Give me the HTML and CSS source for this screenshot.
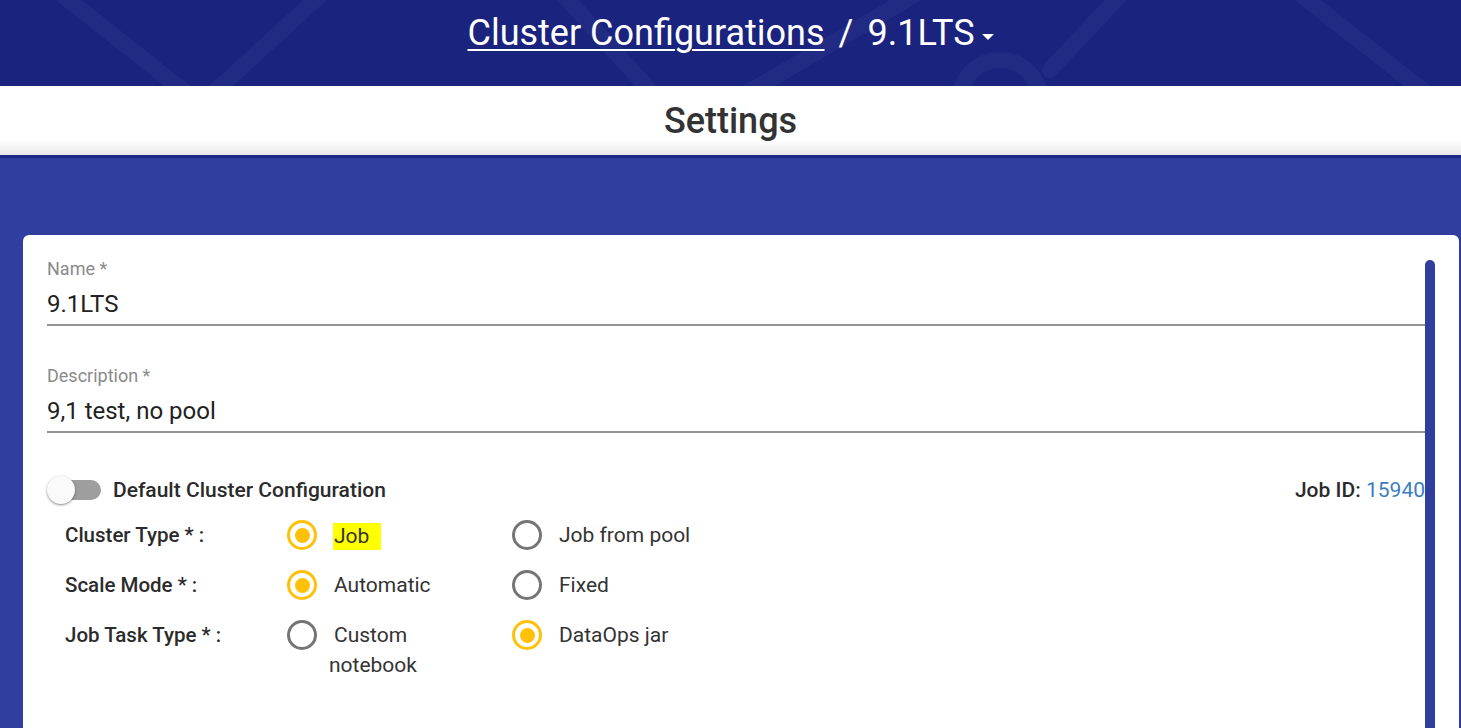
FILE: index.html
```
<!DOCTYPE html>
<html lang="en">
<head>
<meta charset="utf-8">
<title>Cluster Configurations - Settings</title>
<link rel="stylesheet" href="styles.css">
</head>
<body>
<header class="topbar">
  <svg class="deco" width="1461" height="86" viewBox="0 0 1461 86" aria-hidden="true">
    <g stroke="#ffffff" stroke-opacity="0.04" stroke-width="16" fill="none" stroke-linecap="round">
      <line x1="56" y1="-10" x2="190" y2="96"/>
      <line x1="326" y1="-10" x2="210" y2="96"/>
      <line x1="559" y1="-10" x2="655" y2="96"/>
      <line x1="923" y1="-10" x2="742" y2="96"/>
      <circle cx="1000" cy="100" r="40"/>
      <line x1="1125" y1="-10" x2="1050" y2="70"/>
      <line x1="1295" y1="-10" x2="1430" y2="96"/>
    </g>
  </svg>
  <h1 class="crumbs">
    <a class="crumb-link" href="#">Cluster Configurations</a>
    <span class="crumb-sep">/</span>
    <span class="crumb-current">9.1LTS</span>
    <span class="caret"></span>
  </h1>
</header>

<div class="titlebar">
  <h2 class="title">Settings</h2>
</div>

<main class="content">
  <section class="card">
    <div class="form">
      <div class="field first">
        <div class="field-label">Name *</div>
        <div class="field-value">9.1LTS</div>
      </div>
      <div class="field">
        <div class="field-label">Description *</div>
        <div class="field-value">9,1 test, no pool</div>
      </div>

      <div class="toggle-row">
        <div class="toggle-left">
          <span class="switch"><span class="switch-track"></span><span class="switch-thumb"></span></span>
          <span class="toggle-label">Default Cluster Configuration</span>
        </div>
        <div class="job-id"><span class="job-id-key">Job ID:</span> <span class="job-id-val">15940</span></div>
      </div>

      <div class="opt-row">
        <div class="opt-label">Cluster Type * :</div>
        <div class="opt">
          <span class="radio on"></span>
          <span class="opt-text narrow"><span class="hl">Job</span></span>
        </div>
        <div class="opt">
          <span class="radio"></span>
          <span class="opt-text">Job from pool</span>
        </div>
      </div>

      <div class="opt-row">
        <div class="opt-label">Scale Mode * :</div>
        <div class="opt">
          <span class="radio on"></span>
          <span class="opt-text narrow">Automatic</span>
        </div>
        <div class="opt">
          <span class="radio"></span>
          <span class="opt-text">Fixed</span>
        </div>
      </div>

      <div class="opt-row">
        <div class="opt-label">Job Task Type * :</div>
        <div class="opt">
          <span class="radio"></span>
          <span class="opt-text narrow">Custom notebook</span>
        </div>
        <div class="opt">
          <span class="radio on"></span>
          <span class="opt-text">DataOps jar</span>
        </div>
      </div>
    </div>
    <div class="scroll-track"><div class="scroll-thumb"></div></div>
  </section>
</main>
</body>
</html>
```

FILE: styles.css
```
* { box-sizing: border-box; }

html, body {
  margin: 0;
  height: 728px;
  overflow: hidden;
}

body {
  background: #303f9f;
  font-family: Roboto, "Noto Sans", "Liberation Sans", sans-serif;
  color: #333;
}

.topbar {
  position: relative;
  height: 86px;
  background: #1a237e;
  overflow: hidden;
  display: flex;
  justify-content: center;
}

.deco {
  position: absolute;
  left: 0;
  top: 0;
}

.crumbs {
  position: relative;
  margin: 0;
  padding-top: 11px;
  font-size: 36px;
  font-weight: 400;
  line-height: 44px;
  color: #fff;
  display: flex;
  align-items: center;
  height: 55px;
}

.crumb-link {
  color: #fff;
  text-decoration: underline;
  text-decoration-thickness: 2px;
  text-underline-offset: 4px;
}

.crumb-sep {
  margin: 0 14px;
}

.caret {
  width: 0;
  height: 0;
  border-left: 6px solid transparent;
  border-right: 6px solid transparent;
  border-top: 6px solid #fff;
  margin-left: 7px;
  margin-top: 8px;
}

.titlebar {
  height: 72px;
  background: linear-gradient(#ffffff 0%, #ffffff 78%, #e9e9e9 100%);
  border-bottom: 3px solid #1f2888;
  display: flex;
  justify-content: center;
}

.title {
  margin: 0;
  font-size: 36px;
  font-weight: 500;
  color: #333;
  line-height: 70px;
}

.content {
  padding: 77px 2px 0 23px;
}

.card {
  background: #fff;
  border-radius: 6px;
  height: 520px;
  display: flex;
  padding: 0 24px 0 24px;
}

.form {
  flex: 1;
  padding-top: 23px;
}

.field {
  margin-top: 39px;
  border-bottom: 2px solid #959595;
}

.field.first {
  margin-top: 0;
}

.field-label {
  font-size: 18px;
  line-height: 21px;
  color: #8a8a8a;
  margin-bottom: 5px;
}

.field-value {
  font-size: 24px;
  line-height: 40px;
  color: #222;
}

.toggle-row {
  margin-top: 42px;
  height: 30px;
  display: flex;
  align-items: center;
  justify-content: space-between;
}

.toggle-left {
  display: flex;
  align-items: center;
}

.switch {
  position: relative;
  width: 54px;
  height: 30px;
  display: flex;
  align-items: center;
}

.switch-track {
  display: block;
  width: 50px;
  height: 20px;
  margin-left: 4px;
  border-radius: 10px;
  background: #9e9e9e;
}

.switch-thumb {
  position: absolute;
  left: 0;
  top: 1px;
  width: 28px;
  height: 28px;
  border-radius: 50%;
  background: #fafafa;
  box-shadow: 0 1px 3px rgba(0,0,0,0.35), 0 1px 1px rgba(0,0,0,0.14);
}

.toggle-label {
  margin-left: 12px;
  font-size: 21px;
  font-weight: 500;
  color: #2b2b2b;
}

.job-id {
  font-size: 21px;
  white-space: nowrap;
}

.job-id-key {
  font-weight: 500;
  color: #2b2b2b;
}

.job-id-val {
  color: #3b7ec0;
}

.opt-row {
  display: flex;
  align-items: flex-start;
  min-height: 50px;
  padding-top: 10px;
}

.toggle-row + .opt-row {
  margin-top: 5px;
}

.opt-label {
  width: 240px;
  padding-left: 18px;
  font-size: 20.5px;
  font-weight: 500;
  line-height: 30px;
  color: #2b2b2b;
}

.opt {
  width: 225px;
  display: flex;
  align-items: flex-start;
}

.radio {
  position: relative;
  flex: none;
  width: 30px;
  height: 30px;
  border: 3px solid #757575;
  border-radius: 50%;
}

.radio.on {
  border-color: #ffc107;
}

.radio.on::after {
  content: "";
  position: absolute;
  left: 4.5px;
  top: 4.5px;
  width: 15px;
  height: 15px;
  border-radius: 50%;
  background: #ffc107;
}

.opt-text {
  margin-left: 12px;
  text-indent: 5px;
  font-size: 21px;
  line-height: 30px;
  color: #333;
}

.opt-text.narrow {
  max-width: 130px;
}

.hl {
  display: inline-block;
  text-indent: 0;
  margin-left: -1px;
  background: #ffff00;
  height: 27px;
  line-height: 27px;
  padding-right: 12px;
  padding-left: 1px;
  vertical-align: middle;
}

.scroll-track {
  width: 10px;
  flex: none;
  padding-top: 25px;
}

.scroll-thumb {
  width: 10px;
  height: 600px;
  border-radius: 5px;
  background: #303f9f;
}
```
